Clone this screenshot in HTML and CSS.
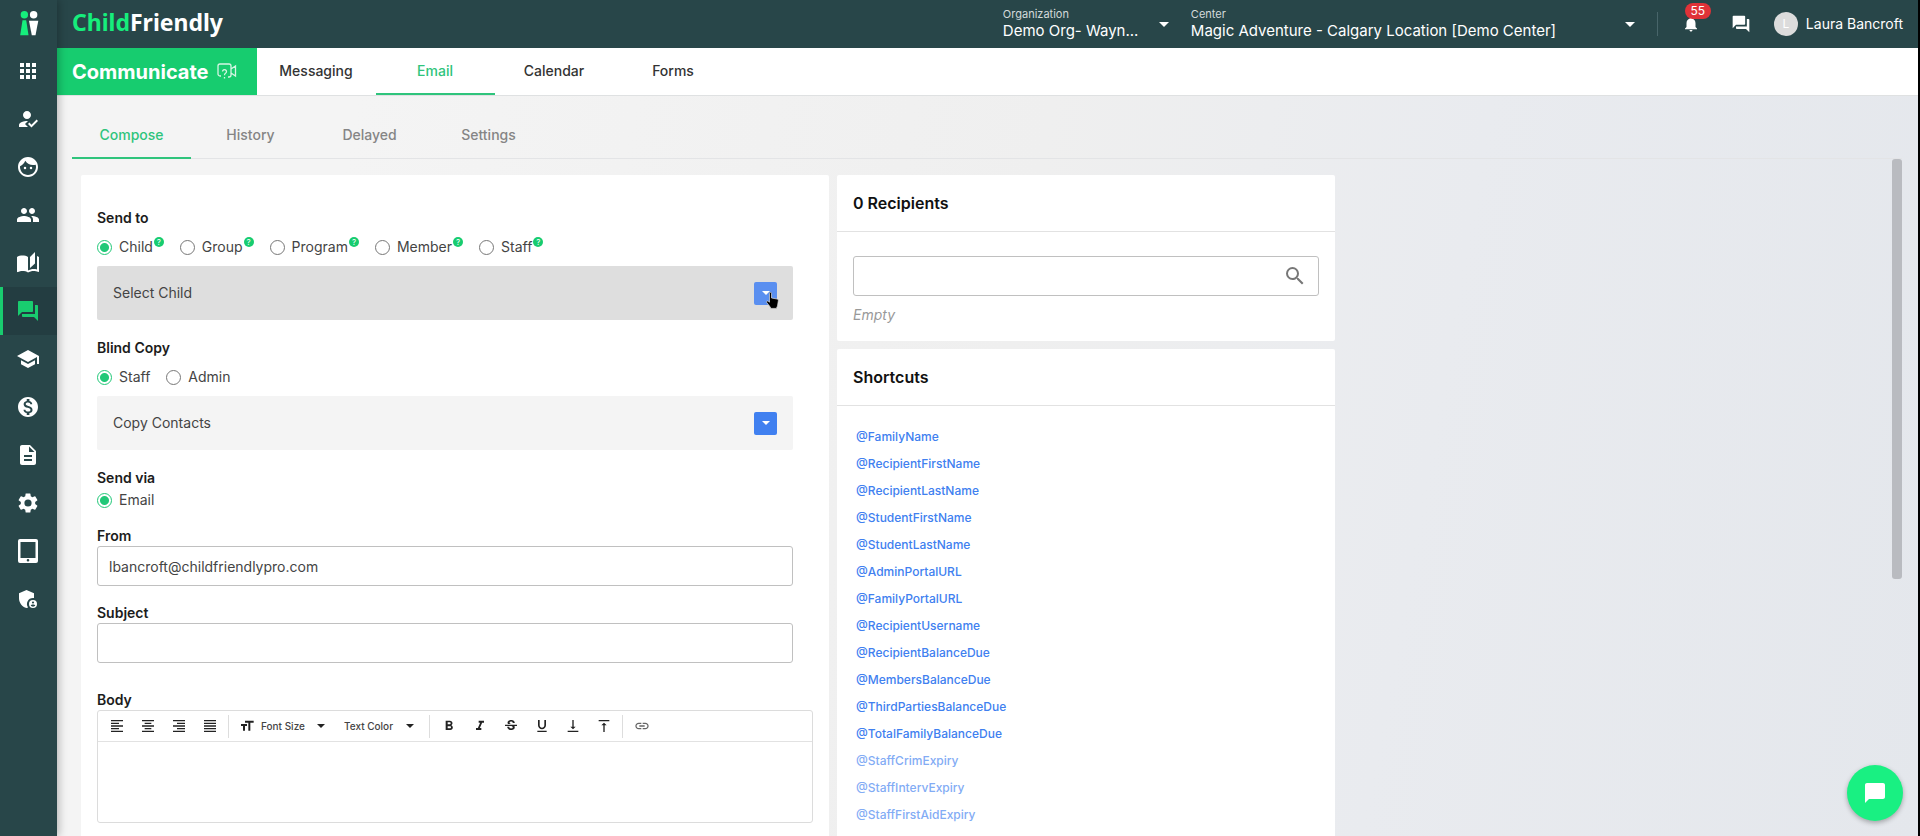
FILE: index.html
```html
<!DOCTYPE html>
<html lang="en">
<head>
    <meta charset="UTF-8">
    <title>Communicate - Email</title>
    <link rel="stylesheet" href="styles.css">
</head>
<body>
    <aside class="sidebar">
        <a class="brand-mark" href="#" aria-label="Home">
            <svg width="20" height="28" viewBox="0 0 20 28">
                <circle cx="5" cy="4" r="4" fill="#16ee7c"/>
                <path d="M3 10h4l2.500 16h-9z" fill="#16ee7c"/>
                <circle cx="15" cy="4" r="4" fill="#fff"/>
                <path d="M10 10.500h10l-3 15.500h-4z" fill="#fff"/>
            </svg>
        </a>
        <nav class="side-nav">
            <a href="#" aria-label="Dashboard"><svg viewBox="0 0 24 24"><path d="M4 8h4V4H4v4zm6 12h4v-4h-4v4zm-6 0h4v-4H4v4zm0-6h4v-4H4v4zm6 0h4v-4h-4v4zm6-10v4h4V4h-4zm-6 4h4V4h-4v4zm6 6h4v-4h-4v4zm0 6h4v-4h-4v4z"/></svg></a>
            <a href="#" aria-label="Attendance"><svg viewBox="0 0 24 24"><path d="M9 17l3-2.940c-.390-.040-.680-.060-1-.060-2.670 0-8 1.340-8 4v2h9l-3-3zm2-5c2.210 0 4-1.790 4-4s-1.790-4-4-4-4 1.790-4 4 1.790 4 4 4m4.470 8.500L12 17l1.400-1.410 2.070 2.080 5.130-5.170 1.400 1.410z"/></svg></a>
            <a href="#" aria-label="Children"><svg viewBox="0 0 24 24"><path d="M9 11.750a1.250 1.250 0 1 0 0 2.500 1.250 1.250 0 0 0 0-2.500zm6 0a1.250 1.250 0 1 0 0 2.500 1.250 1.250 0 0 0 0-2.500zM12 2C6.480 2 2 6.480 2 12s4.480 10 10 10 10-4.480 10-10S17.520 2 12 2zm0 18c-4.410 0-8-3.590-8-8 0-.290.020-.580.050-.860 2.360-1.050 4.230-2.980 5.210-5.370a9.974 9.974 0 0 0 10.410 3.970c.210.710.330 1.470.330 2.260 0 4.410-3.590 8-8 8z"/></svg></a>
            <a href="#" aria-label="Families"><svg viewBox="0 0 24 24"><path d="M16 11c1.660 0 2.990-1.340 2.990-3S17.660 5 16 5s-3 1.340-3 3 1.340 3 3 3zm-8 0c1.660 0 2.990-1.340 2.990-3S9.660 5 8 5 5 6.340 5 8s1.340 3 3 3zm0 2c-2.330 0-7 1.170-7 3.500V19h14v-2.500c0-2.330-4.670-3.500-7-3.500zm8 0c-.290 0-.620.020-.970.050 1.160.840 1.970 1.970 1.970 3.450V19h6v-2.500c0-2.330-4.670-3.500-7-3.500z"/></svg></a>
            <a href="#" aria-label="Curriculum"><svg viewBox="0 0 24 24"><path d="M19 1l-5 5v11l5-4.500V1zM1 6v14.650c0 .250.250.500.500.500.100 0 .150-.050.250-.050C3.100 20.450 5.050 20 6.500 20c1.950 0 4.050.400 5.500 1.500V6c-1.450-1.100-3.550-1.500-5.500-1.500S2.450 4.900 1 6zm22 13.500V6c-.600-.450-1.250-.750-2-1v13.500c-1.100-.350-2.300-.500-3.500-.500-1.700 0-4.150.650-5.500 1.500v2c1.350-.850 3.800-1.500 5.500-1.500 1.650 0 3.350.300 4.750 1.050.100.050.150.050.250.050.250 0 .500-.250.500-.500v-1.100z"/></svg></a>
            <a href="#" class="active" aria-label="Communicate"><svg viewBox="0 0 24 24"><path d="M21 6h-2v9H6v2c0 .550.450 1 1 1h11l4 4V7c0-.550-.450-1-1-1zm-4 6V3c0-.550-.450-1-1-1H3c-.550 0-1 .450-1 1v14l4-4h10c.550 0 1-.450 1-1z"/></svg></a>
            <a href="#" aria-label="Programs"><svg viewBox="0 0 24 24"><path d="M5 13.180v4L12 21l7-3.820v-4L12 17l-7-3.820zM12 3L1 9l11 6 9-4.910V17h2V9L12 3z"/></svg></a>
            <a href="#" aria-label="Billing"><svg viewBox="0 0 24 24"><path d="M12 2C6.480 2 2 6.480 2 12s4.480 10 10 10 10-4.480 10-10S17.520 2 12 2zm1.410 16.090V20h-2.670v-1.930c-1.710-.360-3.160-1.460-3.270-3.400h1.960c.100 1.050.820 1.870 2.650 1.870 1.960 0 2.400-.980 2.400-1.590 0-.830-.440-1.610-2.670-2.140-2.480-.600-4.180-1.620-4.180-3.670 0-1.720 1.390-2.840 3.110-3.210V4h2.670v1.950c1.860.450 2.790 1.860 2.850 3.390H14.300c-.050-1.110-.640-1.870-2.220-1.870-1.500 0-2.400.680-2.400 1.640 0 .840.650 1.390 2.670 1.910s4.180 1.390 4.180 3.910c-.010 1.830-1.380 2.830-3.120 3.160z"/></svg></a>
            <a href="#" aria-label="Reports"><svg viewBox="0 0 24 24"><path d="M14 2H6c-1.100 0-1.990.900-1.990 2L4 20c0 1.100.890 2 1.990 2H18c1.100 0 2-.900 2-2V8l-6-6zm2 16H8v-2h8v2zm0-4H8v-2h8v2zm-3-5V3.500L18.500 9H13z"/></svg></a>
            <a href="#" aria-label="Settings"><svg viewBox="0 0 24 24"><path d="M19.140 12.940c.040-.300.060-.610.060-.940s-.020-.640-.070-.940l2.030-1.580a.49.49 0 0 0 .120-.610l-1.920-3.320a.488.488 0 0 0-.590-.220l-2.390.960c-.500-.380-1.030-.700-1.620-.940l-.360-2.540a.484.484 0 0 0-.480-.410h-3.840c-.240 0-.430.170-.470.410l-.360 2.540c-.590.240-1.130.570-1.620.940l-2.390-.960a.488.488 0 0 0-.590.220L2.740 8.870a.49.49 0 0 0 .120.610l2.030 1.580c-.050.300-.090.630-.090.940s.020.640.070.940l-2.030 1.580a.49.49 0 0 0-.120.610l1.920 3.320c.120.220.370.290.590.220l2.390-.960c.500.380 1.030.700 1.620.940l.360 2.540c.050.240.240.410.480.410h3.840c.240 0 .440-.170.470-.410l.360-2.540c.590-.240 1.130-.560 1.620-.940l2.390.960c.220.080.470 0 .590-.220l1.920-3.320a.49.49 0 0 0-.120-.610l-2.010-1.580zM12 15.600A3.600 3.600 0 1 1 12 8.400a3.600 3.600 0 0 1 0 7.200z"/></svg></a>
            <a href="#" aria-label="Kiosk"><svg viewBox="0 0 24 24"><path d="M20 0H4a2 2 0 0 0-2 2v20a2 2 0 0 0 2 2h16a2 2 0 0 0 2-2V2a2 2 0 0 0-2-2zm-8 22.500a1.300 1.300 0 1 1 0-2.600 1.300 1.300 0 0 1 0 2.600zM19.500 19h-15V3h15z"/></svg></a>
            <a href="#" aria-label="Admin"><svg viewBox="0 0 24 24"><path d="M17 11c.340 0 .670.040 1 .090V6.270L10.500 3 3 6.270v4.910c0 4.540 3.200 8.790 7.500 9.820.550-.130 1.080-.320 1.600-.550A5.973 5.973 0 0 1 17 11z"/><path d="M17 13a4 4 0 1 0 0 8 4 4 0 0 0 0-8zm0 1.380a1.120 1.120 0 1 1 0 2.240 1.120 1.120 0 0 1 0-2.240zm0 5.370c-.930 0-1.740-.460-2.240-1.170.050-.720 1.510-1.080 2.240-1.080s2.190.360 2.240 1.080c-.500.710-1.310 1.170-2.240 1.170z"/></svg></a>
        </nav>
    </aside>

    <div class="main">
        <header class="topbar">
            <a class="logo" href="#"><span>Child</span>Friendly</a>
            <div class="picker picker-org">
                <label for="org">Organization</label>
                <select id="org"><option>Demo Org- Wayn...</option></select>
                <i class="caret"></i>
            </div>
            <div class="picker picker-center">
                <label for="center">Center</label>
                <select id="center"><option>Magic Adventure - Calgary Location [Demo Center]</option></select>
                <i class="caret"></i>
            </div>
            <div class="user-area">
                <button class="icon-btn" aria-label="Notifications">
                    <svg width="18" height="18" viewBox="0 0 24 24"><path d="M12 22c1.100 0 2-.900 2-2h-4c0 1.100.900 2 2 2zm6-6v-5c0-3.070-1.630-5.640-4.500-6.320V4a1.500 1.500 0 0 0-3 0v.680C7.640 5.360 6 7.920 6 11v5l-2 2v1h16v-1l-2-2z"/></svg>
                    <span class="badge">55</span>
                </button>
                <button class="icon-btn" aria-label="Messages">
                    <svg width="20" height="20" viewBox="0 0 24 24"><path d="M21 6h-2v9H6v2c0 .550.450 1 1 1h11l4 4V7c0-.550-.450-1-1-1zm-4 6V3c0-.550-.450-1-1-1H3c-.550 0-1 .450-1 1v14l4-4h10c.550 0 1-.450 1-1z"/></svg>
                </button>
                <a class="user" href="#"><span class="avatar">L</span>Laura Bancroft</a>
            </div>
        </header>

        <nav class="module-nav">
            <h1>Communicate
                <svg width="20" height="18" viewBox="0 0 20 18" fill="none" stroke="#d5f5e3" stroke-width="1.300">
                    <path d="M4 13H3a2 2 0 0 1-2-2V3a2 2 0 0 1 2-2h9a2 2 0 0 1 2 2v9a2 2 0 0 1-2 2h-1M14 6l4.500-3v10L14 10"/>
                    <path d="M5.500 8.500a2 2 0 1 1 3 1.800c-.800.500-1 .900-1 1.900M7.500 14v1.600"/>
                </svg>
            </h1>
            <a href="#">Messaging</a>
            <a href="#" class="active">Email</a>
            <a href="#">Calendar</a>
            <a href="#">Forms</a>
        </nav>

        <div class="content">
            <nav class="sub-nav">
                <a href="#" class="active">Compose</a>
                <a href="#">History</a>
                <a href="#">Delayed</a>
                <a href="#">Settings</a>
            </nav>
            <div class="scroll-area">
                <div class="columns">
                    <form class="card compose">
                        <fieldset>
                            <legend>Send to</legend>
                            <div class="radios">
                                <label><input type="radio" name="sendto" checked>Child<sup>?</sup></label>
                                <label><input type="radio" name="sendto">Group<sup>?</sup></label>
                                <label><input type="radio" name="sendto">Program<sup>?</sup></label>
                                <label><input type="radio" name="sendto">Member<sup>?</sup></label>
                                <label><input type="radio" name="sendto">Staff<sup>?</sup></label>
                            </div>
                            <button type="button" class="expander hover">Select Child
                                <span class="toggle"><i class="caret"></i>
                                    <svg class="pointer" width="13" height="17" viewBox="0 0 13 17"><path d="M3.500 1.300c0-1.300 2-1.300 2 0V6l5.500 1c1 .200 1.400.800 1.300 1.800l-.800 5.200-1.200 2.400H5L3.500 14 .700 10.500C0 9.500 1.200 8.500 2.200 9.200l1.300 1z" fill="#000" stroke="#ddd" stroke-width=".7"/></svg>
                                </span>
                            </button>
                        </fieldset>
                        <fieldset>
                            <legend>Blind Copy</legend>
                            <div class="radios">
                                <label><input type="radio" name="bcc" checked>Staff</label>
                                <label><input type="radio" name="bcc">Admin</label>
                            </div>
                            <button type="button" class="expander">Copy Contacts
                                <span class="toggle"><i class="caret"></i></span>
                            </button>
                        </fieldset>
                        <fieldset class="send-via">
                            <legend>Send via</legend>
                            <div class="radios">
                                <label><input type="radio" name="via" checked>Email</label>
                            </div>
                        </fieldset>
                        <div class="field">
                            <label for="from">From</label>
                            <input type="text" id="from" value="lbancroft@childfriendlypro.com">
                        </div>
                        <div class="field">
                            <label for="subject">Subject</label>
                            <input type="text" id="subject">
                        </div>
                        <div class="body-field">
                            <label for="body">Body</label>
                            <div class="editor">
                                <div class="toolbar">
                                    <button type="button" aria-label="Align left"><svg viewBox="0 0 24 24"><path d="M15 15H3v2h12v-2zm0-8H3v2h12V7zM3 13h18v-2H3v2zm0 8h18v-2H3v2zM3 3v2h18V3H3z"/></svg></button>
                                    <button type="button" aria-label="Align center"><svg viewBox="0 0 24 24"><path d="M7 15v2h10v-2H7zm-4 6h18v-2H3v2zm0-8h18v-2H3v2zm4-6v2h10V7H7zM3 3v2h18V3H3z"/></svg></button>
                                    <button type="button" aria-label="Align right"><svg viewBox="0 0 24 24"><path d="M3 21h18v-2H3v2zm6-4h12v-2H9v2zm-6-4h18v-2H3v2zm6-4h12V7H9v2zM3 3v2h18V3H3z"/></svg></button>
                                    <button type="button" aria-label="Justify"><svg viewBox="0 0 24 24"><path d="M3 21h18v-2H3v2zm0-4h18v-2H3v2zm0-4h18v-2H3v2zm0-4h18V7H3v2zm0-6v2h18V3H3z"/></svg></button>
                                    <i class="sep"></i>
                                    <div class="tool-select">
                                        <svg viewBox="0 0 24 24"><path d="M9 4v3h5v12h3V7h5V4H9zm-6 8h3v7h3v-7h3V9H3v3z"/></svg>
                                        <select aria-label="Font Size"><option>Font Size</option></select>
                                        <i class="caret"></i>
                                    </div>
                                    <div class="tool-select">
                                        <select aria-label="Text Color"><option>Text Color</option></select>
                                        <i class="caret"></i>
                                    </div>
                                    <i class="sep"></i>
                                    <button type="button" aria-label="Bold"><svg viewBox="0 0 24 24"><path d="M15.600 10.790c.970-.670 1.650-1.770 1.650-2.790 0-2.260-1.750-4-4-4H7v14h7.040c2.090 0 3.710-1.700 3.710-3.790 0-1.520-.860-2.820-2.150-3.420zM10 6.500h3c.830 0 1.500.670 1.500 1.500s-.670 1.500-1.500 1.500h-3v-3zm3.500 9H10v-3h3.500c.830 0 1.500.670 1.500 1.500s-.670 1.500-1.500 1.500z"/></svg></button>
                                    <button type="button" aria-label="Italic"><svg viewBox="0 0 24 24"><path d="M10 4v3h2.210l-3.420 8H6v3h8v-3h-2.210l3.420-8H18V4z"/></svg></button>
                                    <button type="button" aria-label="Strikethrough"><svg viewBox="0 0 24 24"><path d="M7.240 8.750c-.260-.480-.390-1.030-.390-1.670 0-.610.130-1.160.400-1.670.260-.500.630-.930 1.110-1.290a5.730 5.730 0 0 1 1.700-.830c.660-.190 1.390-.290 2.180-.290.810 0 1.540.110 2.210.340.660.220 1.230.540 1.690.940.470.400.830.880 1.080 1.430s.380 1.150.380 1.810h-3.010c0-.310-.050-.590-.150-.850-.090-.270-.240-.490-.440-.680-.200-.190-.450-.330-.750-.440-.300-.100-.660-.160-1.060-.160-.390 0-.740.040-1.030.130s-.530.210-.720.360c-.190.160-.340.340-.440.550-.100.210-.150.430-.150.660 0 .480.250.880.740 1.210.380.250.770.480 1.410.700H7.390c-.050-.080-.110-.170-.150-.250zM21 12v-2H3v2h9.620c.180.070.400.140.550.200.370.170.660.340.870.510s.350.360.430.570c.070.200.110.430.110.690 0 .230-.050.450-.140.660-.090.200-.230.380-.420.530-.190.150-.420.260-.710.350-.290.080-.630.130-1.010.130-.430 0-.830-.040-1.180-.130s-.660-.230-.910-.420c-.250-.190-.450-.440-.590-.750s-.250-.760-.250-1.210H6.400c0 .550.080 1.130.240 1.580s.370.850.650 1.210c.280.350.600.660.980.920.370.260.780.480 1.220.650.440.170.900.300 1.380.390.480.080.960.130 1.440.130.800 0 1.530-.090 2.180-.280s1.210-.450 1.670-.790c.460-.340.820-.770 1.070-1.270s.380-1.070.38-1.710c0-.600-.100-1.140-.310-1.610l-.170-.350H21z"/></svg></button>
                                    <button type="button" aria-label="Underline"><svg viewBox="0 0 24 24"><path d="M12 17c3.310 0 6-2.690 6-6V3h-2.500v8c0 1.930-1.570 3.500-3.500 3.500S8.500 12.930 8.500 11V3H6v8c0 3.310 2.690 6 6 6zm-7 2v2h14v-2H5z"/></svg></button>
                                    <button type="button" aria-label="Align bottom"><svg viewBox="0 0 24 24"><path d="M16 13h-3V3h-2v10H8l4 4 4-4zM4 19v2h16v-2H4z"/></svg></button>
                                    <button type="button" aria-label="Align top"><svg viewBox="0 0 24 24"><path d="M8 11h3v10h2V11h3l-4-4-4 4zM4 3v2h16V3H4z"/></svg></button>
                                    <i class="sep"></i>
                                    <button type="button" class="link-btn" aria-label="Insert link"><svg viewBox="0 0 24 24"><path d="M3.900 12c0-1.710 1.390-3.100 3.100-3.100h4V7H7c-2.760 0-5 2.240-5 5s2.240 5 5 5h4v-1.900H7c-1.710 0-3.100-1.390-3.100-3.100zM8 13h8v-2H8v2zm9-6h-4v1.900h4c1.710 0 3.100 1.390 3.100 3.100s-1.390 3.100-3.100 3.100h-4V17h4c2.760 0 5-2.240 5-5s-2.240-5-5-5z"/></svg></button>
                                </div>
                                <textarea id="body"></textarea>
                            </div>
                        </div>
                    </form>

                    <div class="side">
                        <section class="card">
                            <h2>0 Recipients</h2>
                            <div class="recipients">
                                <div class="search">
                                    <input type="text" aria-label="Search recipients">
                                    <svg width="24" height="24" viewBox="0 0 24 24"><path d="M15.500 14h-.790l-.280-.270A6.471 6.471 0 0 0 16 9.500 6.500 6.500 0 1 0 9.500 16c1.610 0 3.090-.590 4.230-1.570l.270.280v.790l5 4.990L20.490 19l-4.990-5zm-6 0C7.010 14 5 11.990 5 9.500S7.010 5 9.500 5 14 7.010 14 9.500 11.990 14 9.500 14z"/></svg>
                                </div>
                                <p>Empty</p>
                            </div>
                        </section>
                        <section class="card">
                            <h2>Shortcuts</h2>
                            <ul class="shortcuts">
                                <li><a href="#">@FamilyName</a></li>
                                <li><a href="#">@RecipientFirstName</a></li>
                                <li><a href="#">@RecipientLastName</a></li>
                                <li><a href="#">@StudentFirstName</a></li>
                                <li><a href="#">@StudentLastName</a></li>
                                <li><a href="#">@AdminPortalURL</a></li>
                                <li><a href="#">@FamilyPortalURL</a></li>
                                <li><a href="#">@RecipientUsername</a></li>
                                <li><a href="#">@RecipientBalanceDue</a></li>
                                <li><a href="#">@MembersBalanceDue</a></li>
                                <li><a href="#">@ThirdPartiesBalanceDue</a></li>
                                <li><a href="#">@TotalFamilyBalanceDue</a></li>
                                <li class="disabled"><a href="#">@StaffCrimExpiry</a></li>
                                <li class="disabled"><a href="#">@StaffIntervExpiry</a></li>
                                <li class="disabled"><a href="#">@StaffFirstAidExpiry</a></li>
                            </ul>
                        </section>
                    </div>
                </div>
                <div class="scroll-track"><div class="scroll-thumb"></div></div>
            </div>
        </div>
    </div>

    <button class="chat-btn" aria-label="Open chat">
        <svg width="24" height="24" viewBox="0 0 24 24"><path d="M20 2H4c-1.100 0-2 .900-2 2v18l4-4h14c1.100 0 2-.900 2-2V4c0-1.100-.900-2-2-2z"/></svg>
    </button>
</body>
</html>
```
FILE: styles.css
```css
* {
    box-sizing: border-box;
    margin: 0;
    padding: 0;
}
body {
    display: flex;
    height: 100vh;
    overflow: hidden;
    border-right: 2px solid #000;
    background: #e6e8ec;
    color: #333;
    font: 14px/20px Inter, "Liberation Sans", sans-serif;
}
a {
    color: inherit;
    text-decoration: none;
}
button, input, select, textarea {
    font: inherit;
    color: inherit;
    border: 0;
    background: none;
}
button {
    cursor: pointer;
}
select {
    appearance: none;
}
.caret {
    width: 0;
    height: 0;
    border: 4px solid transparent;
    border-top-color: currentColor;
    border-bottom: 0;
}

/* sidebar */
.sidebar {
    position: relative;
    z-index: 1;
    flex: none;
    width: 57px;
    background: #284649;
    box-shadow: 2px 0 8px rgba(0, 0, 0, .25);
}
.brand-mark {
    display: flex;
    height: 47px;
    align-items: center;
    justify-content: center;
}
.brand-mark svg {
    width: 20px;
    height: 26px;
}
.side-nav a {
    display: flex;
    height: 48px;
    align-items: center;
    justify-content: center;
    border-left: 3px solid transparent;
    padding-right: 4px;
}
.side-nav svg {
    width: 24px;
    height: 24px;
    fill: #fff;
}
.side-nav .active {
    background: #233d41;
    border-color: #19cc6f;
}
.side-nav .active svg {
    fill: #19cc6f;
}

/* header */
.main {
    flex: 1;
    display: flex;
    flex-direction: column;
    min-width: 0;
}
.topbar {
    flex: none;
    display: flex;
    align-items: center;
    height: 48px;
    padding: 0 15px;
    background: #284649;
    color: #fff;
}
.logo {
    margin-right: auto;
    padding-bottom: 4px;
    font: 700 23px/32px "Noto Sans", "Open Sans", sans-serif;
}
.logo span {
    color: #16ee7c;
}
.picker {
    display: grid;
    grid-template-columns: 1fr auto;
    align-items: center;
}
.picker label {
    font-size: 11px;
    line-height: 13px;
    color: #d3dadb;
}
.picker select {
    grid-column: 1;
    font-size: 15px;
    line-height: 20px;
    height: 20px;
}
.picker .caret {
    grid-area: 1 / 2 / 3 / 3;
    border-width: 5px;
    border-bottom: 0;
}
.picker-org {
    width: 166px;
    margin-right: 22px;
}
.picker-center {
    width: 444px;
    margin-right: 22px;
}
.user-area {
    display: flex;
    align-items: center;
    height: 24px;
    border-left: 1px solid #48656a;
    padding-left: 23px;
}
.icon-btn {
    position: relative;
    display: flex;
    justify-content: center;
    width: 20px;
    margin-right: 30px;
}
.icon-btn + .icon-btn {
    margin-right: 23px;
}
.icon-btn svg {
    fill: #fff;
}
.badge {
    position: absolute;
    top: -12px;
    left: 4px;
    width: 26px;
    border-radius: 8px;
    background: #e03238;
    font-size: 12px;
    line-height: 16px;
    color: #fff;
}
.user {
    display: flex;
    align-items: center;
    gap: 8px;
}
.avatar {
    width: 24px;
    border-radius: 50%;
    background: #dcdcdc;
    color: #fff;
    font-size: 12px;
    line-height: 24px;
    text-align: center;
}

/* tabs */
.module-nav {
    flex: none;
    display: flex;
    height: 48px;
    background: #fff;
    border-bottom: 1px solid #dfe1e2;
}
.module-nav h1 {
    display: flex;
    align-items: center;
    gap: 8px;
    padding: 0 20px 0 15px;
    background: #17cc6f;
    color: #fff;
    font-size: 20px;
    font-weight: 700;
}
.module-nav a, .sub-nav a {
    width: 119px;
    text-align: center;
    border-bottom: 2px solid transparent;
}
.module-nav a {
    line-height: 46px;
    font-weight: 500;
}
.module-nav .active, .sub-nav .active {
    color: #2fc47c;
    border-color: #2fc47c;
}
.content {
    flex: 1;
    display: flex;
    flex-direction: column;
    min-height: 0;
    padding: 16px 16px 0 15px;
    background: linear-gradient(100deg, #f4f4f4 15%, #efefef 50%, #e9ebef 72%, #e4e7ec);
}
.sub-nav {
    flex: none;
    display: flex;
    border-bottom: 1px solid #e3e4e6;
}
.sub-nav a {
    height: 47px;
    margin-bottom: -1px;
    line-height: 46px;
    color: #858585;
    font-weight: 500;
}
.sub-nav .active {
    color: #2fc47c;
}
.scroll-area {
    flex: 1;
    display: flex;
    min-height: 0;
    overflow: hidden;
}
.scroll-track {
    width: 10px;
}
.scroll-thumb {
    height: 62%;
    border-radius: 3px;
    background: #b9bbc0;
}

/* columns */
.columns {
    flex: 1;
    display: grid;
    grid-template-columns: 748fr 498fr 549fr;
    gap: 8px;
    align-items: start;
    padding: 16px 0 0 9px;
}
.card {
    background: #fff;
    border-radius: 2px;
}
.compose {
    padding: 33px 16px 32px;
    color: #444;
}
fieldset {
    border: 0;
    margin-bottom: 18px;
}
legend, .field label, .body-field label {
    display: block;
    font-weight: 600;
    color: #1c1c1c;
}
.radios {
    display: flex;
    gap: 16px;
    height: 20px;
    margin: 9px 0;
}
.radios label {
    display: flex;
    align-items: center;
}
.radios input {
    width: 15px;
    height: 15px;
    margin-right: 7px;
    appearance: none;
    border: 1px solid #777;
    border-radius: 50%;
}
.radios input:checked {
    border-color: #21c878;
    background: radial-gradient(#21c878 4px, #fff 5px);
}
.radios sup {
    align-self: flex-start;
    width: 10px;
    margin-left: 1px;
    border-radius: 50%;
    background: #17cc6f;
    color: #fff;
    font-size: 8px;
    line-height: 10px;
    text-align: center;
}
.expander {
    display: flex;
    align-items: center;
    justify-content: space-between;
    width: calc(100% - 20px);
    height: 54px;
    padding: 0 16px;
    border-radius: 2px;
    background: #f4f4f4;
}
.expander.hover {
    background: #dedede;
}
.toggle {
    position: relative;
    display: flex;
    align-items: center;
    justify-content: center;
    width: 23px;
    height: 23px;
    border-radius: 2px;
    background: #4080f0;
    color: #fff;
}
.hover .toggle {
    background: #5a8ff0;
}
.pointer {
    position: absolute;
    left: 12px;
    top: 10px;
}
.send-via {
    margin-bottom: 16px;
}
.send-via .radios {
    margin: 2px 0 0;
}
.field {
    margin-bottom: 17px;
}
.field input, .search input {
    display: block;
    width: calc(100% - 20px);
    height: 40px;
    padding: 0 11px;
    border: 1px solid #c0c0c0;
    border-radius: 3px;
    background: #fff;
}
.body-field {
    padding-top: 10px;
}
.editor {
    border: 1px solid #dcdcdc;
    border-radius: 3px;
}
.toolbar {
    display: flex;
    align-items: center;
    height: 31px;
    padding: 0 3px;
    border-bottom: 1px solid #e2e2e2;
    color: #222;
}
.toolbar button {
    display: flex;
    align-items: center;
    justify-content: center;
    width: 31px;
    height: 24px;
}
.toolbar svg {
    width: 16px;
    height: 16px;
    fill: #222;
}
.toolbar .link-btn svg {
    fill: #666;
}
.sep {
    width: 1px;
    height: 23px;
    margin: 0 3px;
    background: #ddd;
}
.tool-select {
    display: flex;
    align-items: center;
    margin: 0 12px 0 7px;
    font-size: 10px;
    font-weight: 500;
    line-height: 16px;
    color: #444;
}
.tool-select svg {
    margin-right: 6px;
}
.tool-select select {
    margin-right: 12px;
}
.tool-select .caret {
    color: #222;
}
textarea {
    display: block;
    width: 100%;
    height: 80px;
    resize: none;
}

/* right column */
.side {
    display: grid;
    gap: 8px;
}
.side h2 {
    padding: 16px;
    border-bottom: 1px solid #e2e2e2;
    font-size: 16px;
    font-weight: 600;
    line-height: 24px;
    color: #111;
}
.recipients {
    padding: 24px 16px 16px;
}
.recipients p {
    margin-top: 9px;
    font-style: italic;
    color: #999;
}
.search {
    position: relative;
}
.search input {
    width: 100%;
}
.search svg {
    position: absolute;
    right: 12px;
    top: 8px;
    fill: #777;
}
.shortcuts {
    list-style: none;
    padding: 17px 19px;
}
.shortcuts a {
    display: block;
    font-size: 12px;
    font-weight: 500;
    line-height: 27px;
    color: #4080f0;
}
.shortcuts .disabled {
    opacity: .65;
}

.chat-btn {
    position: fixed;
    right: 17px;
    bottom: 15px;
    display: flex;
    align-items: center;
    justify-content: center;
    width: 56px;
    height: 56px;
    border-radius: 50%;
    background: #19f082;
    box-shadow: 0 2px 5px rgba(0, 0, 0, .3);
}
.chat-btn svg {
    fill: #fff;
}
```
